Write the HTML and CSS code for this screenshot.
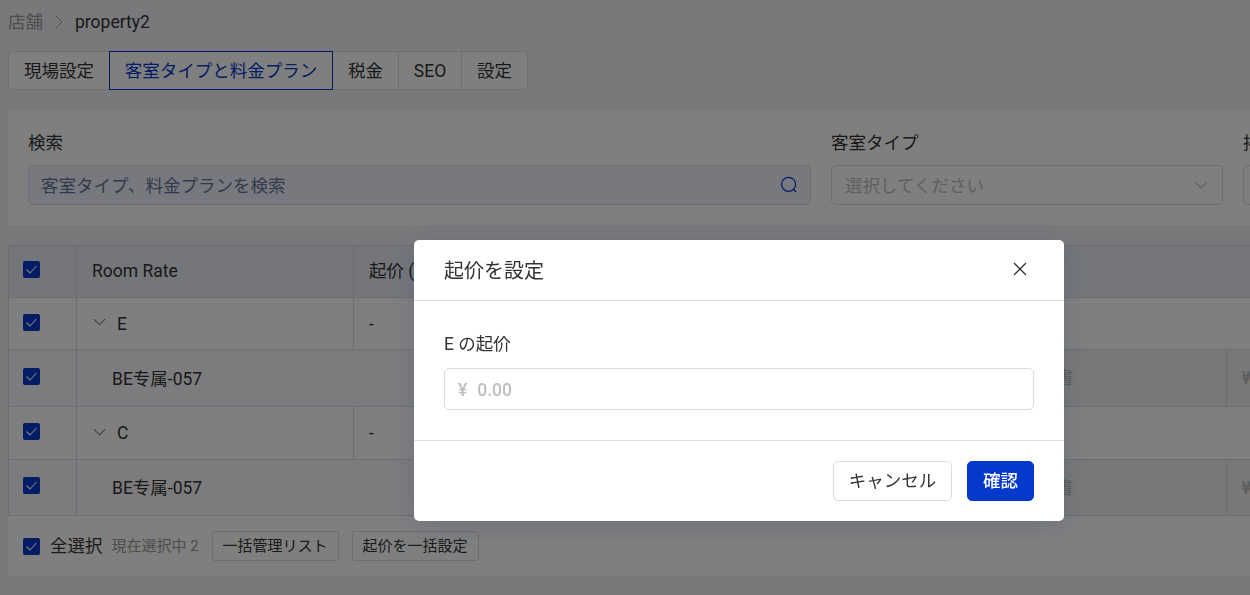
FILE: index.html
```html
<!DOCTYPE html>
<html lang="ja">
<head>
<meta charset="utf-8">
<title>property2</title>
<link rel="stylesheet" href="styles.css">
</head>
<body>
<svg class="defs" width="0" height="0">
  <symbol id="check" viewBox="0 0 17 17"><path d="M3.5 8.5 L7 12 L13.5 5" fill="none" stroke="currentColor" stroke-width="1.1"/></symbol>
  <symbol id="down" viewBox="0 0 14 8"><path d="M1 1 L7 7 L13 1" fill="none" stroke="currentColor" stroke-width="1.1"/></symbol>
</svg>
<div class="page">
  <nav class="crumbs"><span class="crumb-parent">店舗</span><svg class="crumb-sep" viewBox="0 0 8 14"><path d="M1 1 L7 7 L1 13" fill="none" stroke="currentColor"/></svg><span>property2</span></nav>
  <div class="tabs">
    <div class="tab tab-site">現場設定</div>
    <div class="tab tab-rate active">客室タイプと料金プラン</div>
    <div class="tab tab-tax">税金</div>
    <div class="tab tab-seo">SEO</div>
    <div class="tab tab-last">設定</div>
  </div>
  <section class="filters">
    <div class="field field-search"><label class="label">検索</label>
      <div class="control search"><span>客室タイプ、料金プランを検索</span><svg class="search-icon" viewBox="0 0 18 18"><g fill="none" stroke="currentColor" stroke-width="1.3"><circle cx="8.6" cy="8.3" r="7"/><path d="M13.4 13.2 L16 16"/></g></svg></div>
    </div>
    <div class="field field-type"><label class="label">客室タイプ</label>
      <div class="control select"><span>選択してください</span><svg class="select-arrow"><use href="#down"/></svg></div>
    </div>
    <div class="field field-type"><label class="label">掲</label>
      <div class="control select"></div>
    </div>
  </section>
  <section class="table">
    <div class="row head">
      <div class="cell check-cell"><span class="box"><svg><use href="#check"/></svg></span></div>
      <div class="cell name">Room Rate</div>
      <div class="cell price">起价 (</div>
    </div>
    <div class="row parent-first">
      <div class="cell check-cell"><span class="box"><svg><use href="#check"/></svg></span></div>
      <div class="cell name"><svg class="expand"><use href="#down"/></svg>E</div>
      <div class="cell price">-</div>
    </div>
    <div class="row child child-first">
      <div class="cell check-cell"><span class="box"><svg><use href="#check"/></svg></span></div>
      <div class="cell child-name">BE专属-057</div>
      <div class="cell locked plan">書</div>
      <div class="cell locked amount">₩</div>
    </div>
    <div class="row parent-second">
      <div class="cell check-cell"><span class="box"><svg><use href="#check"/></svg></span></div>
      <div class="cell name"><svg class="expand"><use href="#down"/></svg>C</div>
      <div class="cell price">-</div>
    </div>
    <div class="row child child-second">
      <div class="cell check-cell"><span class="box"><svg><use href="#check"/></svg></span></div>
      <div class="cell child-name">BE专属-057</div>
      <div class="cell locked plan">書</div>
      <div class="cell locked amount">₩</div>
    </div>
    <div class="bulk">
      <span class="box"><svg><use href="#check"/></svg></span>
      <span class="all">全選択</span>
      <span class="count">現在選択中 2</span>
      <button class="small-btn">一括管理リスト</button>
      <button class="small-btn">起价を一括設定</button>
    </div>
  </section>
</div>
<div class="mask">
  <div class="modal">
    <header class="modal-head"><span>起价を設定</span><svg class="close" viewBox="0 0 14 14"><path d="M1 1 L13 13 M13 1 L1 13" fill="none" stroke="currentColor" stroke-width="1.3"/></svg></header>
    <div class="modal-body">
      <label class="modal-label">E の起价</label>
      <div class="money"><span>¥</span><span>0.00</span></div>
    </div>
    <footer class="modal-foot"><button class="btn">キャンセル</button><button class="btn primary">確認</button></footer>
  </div>
</div>
</body>
</html>
```

FILE: styles.css
```css
* { box-sizing: border-box; }
body {
  margin: 0;
  height: 595px;
  overflow: hidden;
  background: #f3f3f6;
  color: #333;
  font: 17.5px/26px Roboto, "Noto Sans CJK JP", sans-serif;
}
button { font: inherit; color: inherit; background: transparent; padding: 0; white-space: nowrap; }
.defs { display: block; height: 0; }
.page { padding-left: 8px; overflow: hidden; }

.crumbs { display: flex; align-items: center; height: 51px; padding-bottom: 8px; }
.crumb-parent { color: #999; }
.crumb-sep { width: 8px; height: 14px; margin: 0 12px; color: #aaa; }

.tabs { display: flex; height: 39px; }
.tab { display: flex; align-items: center; justify-content: center; background: #fff; border: 1px solid #e0e0e0; border-left-width: 0; white-space: nowrap; }
.tab-site { width: 101px; border-left-width: 1px; border-right-width: 0; border-radius: 5px 0 0 5px; }
.tab-rate { width: 224px; }
.tab-tax { width: 66px; }
.tab-seo { width: 63px; }
.tab-last { width: 66px; border-radius: 0 5px 5px 0; }
.tab.active { border: 1px solid #0539cc; color: #0539cc; }

.filters { display: flex; gap: 20px; height: 115px; margin-top: 20px; padding: 20px 20px 0; background: #fff; }
.field { flex: none; }
.field-search { width: 783px; }
.field-type { width: 392px; }
.label { display: block; height: 35px; }
.control { display: flex; align-items: center; justify-content: space-between; height: 40px; padding: 1px 13px 0; border: 1px solid #dcdcdc; border-radius: 5px; color: #bfbfbf; }
.search { padding: 1px 12px 0; background: #eff2ff; color: #65759a; }
.search-icon { width: 18px; height: 18px; margin-bottom: 1px; color: #0539cc; }
.select-arrow { width: 14px; height: 8px; margin: 0 1px 1px 0; }

.table { margin-top: 20px; }
.row { display: flex; border-bottom: 1px solid #dadde8; background: #fff; }
.cell { display: flex; flex: none; align-items: center; padding: 0 15px; border-left: 1px solid #dadde8; }
.head { height: 53px; background: #e9ecf5; border-top: 1px solid #dadde8; }
.head .cell { padding-bottom: 2px; }
.head .check-cell { padding-bottom: 5px; }
.parent-first { height: 52px; }
.child { background: #f9f9fc; }
.child-first { height: 57px; }
.child-first .child-name { padding-top: 2px; }
.parent-second { height: 53px; }
.child-second { height: 56px; }
.check-cell { width: 68px; padding: 0 14px 3px; }
.child-second .check-cell { padding-bottom: 4px; }
.name { width: 277px; }
.cell.price { flex: 1; }
.child-name { width: 700px; padding-left: 35px; }
.locked { background: #f0f0f0; color: #b8b8b8; }
.plan { width: 450px; padding-left: 279px; }
.cell.amount { flex: 1; min-width: 0; padding-right: 0; }
.expand { width: 13px; height: 8px; margin: 0 11px 3px 1px; color: #777; }
.box { display: block; flex: none; width: 17px; height: 17px; border-radius: 2px; background: #0539cc; color: #fff; }
.box svg { display: block; width: 17px; height: 17px; }

.bulk { display: flex; align-items: center; height: 60px; padding-left: 15px; background: #fff; }
.all { margin-left: 10px; }
.count { width: 88px; margin: 0 12px 0 9px; color: #999; font-size: 15px; white-space: nowrap; }
.small-btn { width: 127px; height: 30px; margin-right: 13px; border: 1px solid #dcdcdc; border-radius: 3px; font-size: 15px; line-height: 26px; }

.mask { position: fixed; inset: 0; padding: 240px 0 0 414px; background: rgba(0, 0, 0, .5); }
.modal { width: 650px; height: 281px; border-radius: 5px; background: #fff; box-shadow: 0 5px 25px rgba(50, 70, 120, .22); }
.modal-head { display: flex; align-items: center; justify-content: space-between; height: 61px; padding: 1px 37px 0 30px; border-bottom: 1px solid #e0e0e0; font-size: 20px; }
.close { width: 14px; height: 14px; margin-bottom: 3px; }
.modal-body { height: 139px; padding: 30px 30px 0; }
.modal-label { display: block; height: 37px; }
.money { display: flex; align-items: center; gap: 10px; height: 42px; padding: 2px 13px 0; border: 1px solid #dcdcdc; border-radius: 5px; color: #bfbfbf; font-weight: 500; }
.modal-foot { display: flex; justify-content: flex-end; gap: 15px; height: 81px; padding: 20px 30px 0; border-top: 1px solid #e0e0e0; }
.btn { width: 119px; height: 40px; border: 1px solid #dcdcdc; border-radius: 5px; }
.btn.primary { width: 67px; border-color: #0539cc; background: #0539cc; color: #fff; font-weight: 500; }
```
